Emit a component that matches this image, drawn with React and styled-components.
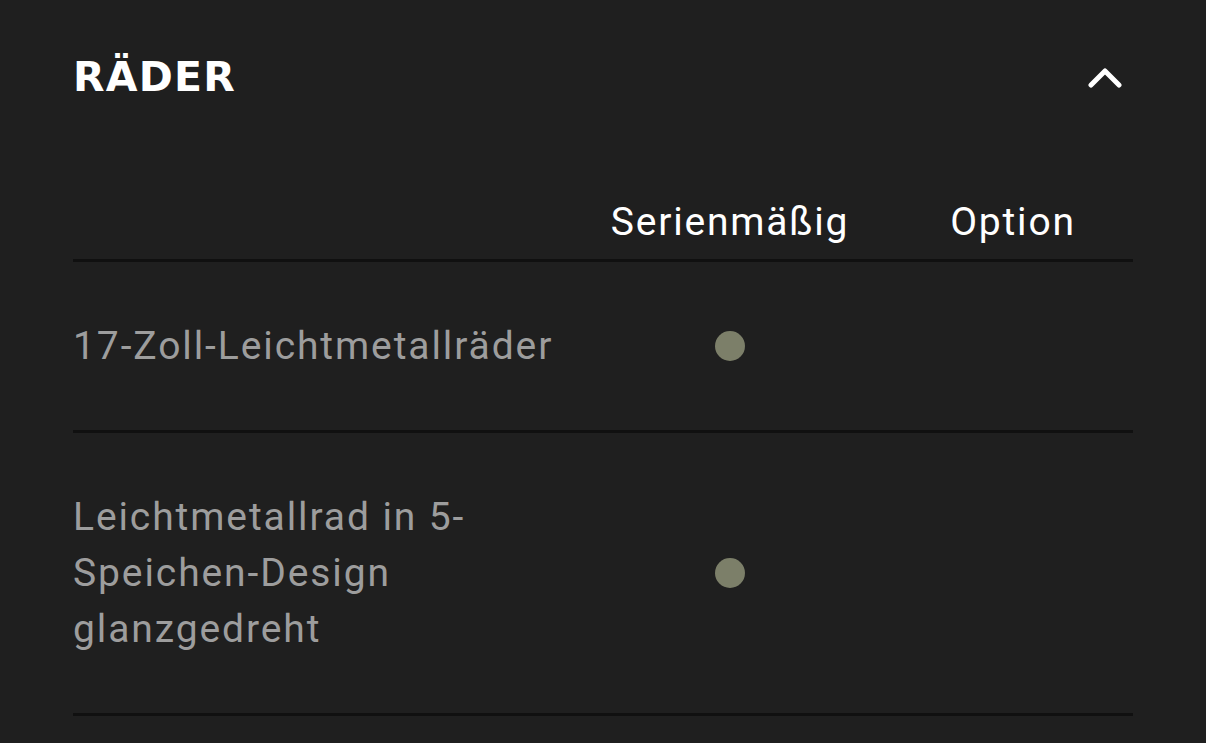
import React from "react";
import styled, { createGlobalStyle } from "styled-components";

const Global = createGlobalStyle`
  html, body { margin: 0; padding: 0; background: #1f1f1f; }
  body { font-family: Roboto, "Liberation Sans", sans-serif; }
`;

const Section = styled.section`
  box-sizing: border-box;
  width: 1206px;
  min-height: 743px;
  padding: 40px 73px 0 73px;
  background: #1f1f1f;
`;

const Header = styled.div`
  display: flex;
  align-items: center;
  justify-content: space-between;
  height: 74px;
`;

const Title = styled.h2`
  margin: 0;
  font-family: "DejaVu Sans", sans-serif;
  font-weight: 700;
  font-size: 41px;
  line-height: 1;
  color: #ffffff;
  letter-spacing: 1.2px;
`;

const Toggle = styled.button`
  display: flex;
  align-items: center;
  justify-content: center;
  margin: 0 11px 0 0;
  padding: 0;
  border: 0;
  background: none;
  cursor: pointer;
`;

const Table = styled.div`
  margin-top: 80px;
  display: flex;
  flex-direction: column;
`;

const Row = styled.div`
  display: grid;
  grid-template-columns: 1fr 326px 240px;
  align-items: center;
  border-bottom: 3px solid #101010;
  padding: ${(p) => (p.$head ? "0 0 9px 0" : "56px 0")};
`;

const HeadCell = styled.div`
  font-size: 39px;
  line-height: 56px;
  letter-spacing: 1.8px;
  color: #ffffff;
  text-align: center;
`;

const Label = styled.div`
  font-size: 39px;
  line-height: 56px;
  letter-spacing: 1.9px;
  color: #9d9d9d;
`;

const Mark = styled.div`
  display: flex;
  justify-content: center;
`;

const Dot = styled.span`
  width: 30px;
  height: 30px;
  border-radius: 50%;
  background: #7c7f69;
`;

const rows = [
  { label: "17-Zoll-Leichtmetallräder", standard: true },
  { label: "Leichtmetallrad in 5-Speichen-Design glanzgedreht", standard: true },
];

export default function App() {
  return (
    <>
      <Global />
      <Section>
        <Header>
          <Title>RÄDER</Title>
          <Toggle aria-label="Einklappen">
            <svg width="34" height="22" viewBox="0 0 34 22">
              <polyline
                points="3,19 17,5 31,19"
                fill="none"
                stroke="#ffffff"
                strokeWidth="5"
                strokeLinecap="round"
                strokeLinejoin="round"
              />
            </svg>
          </Toggle>
        </Header>
        <Table>
          <Row $head>
            <div />
            <HeadCell>Serienmäßig</HeadCell>
            <HeadCell>Option</HeadCell>
          </Row>
          {rows.map((r) => (
            <Row key={r.label}>
              <Label>{r.label}</Label>
              <Mark>{r.standard && <Dot />}</Mark>
              <Mark>{!r.standard && <Dot />}</Mark>
            </Row>
          ))}
        </Table>
      </Section>
    </>
  );
}
